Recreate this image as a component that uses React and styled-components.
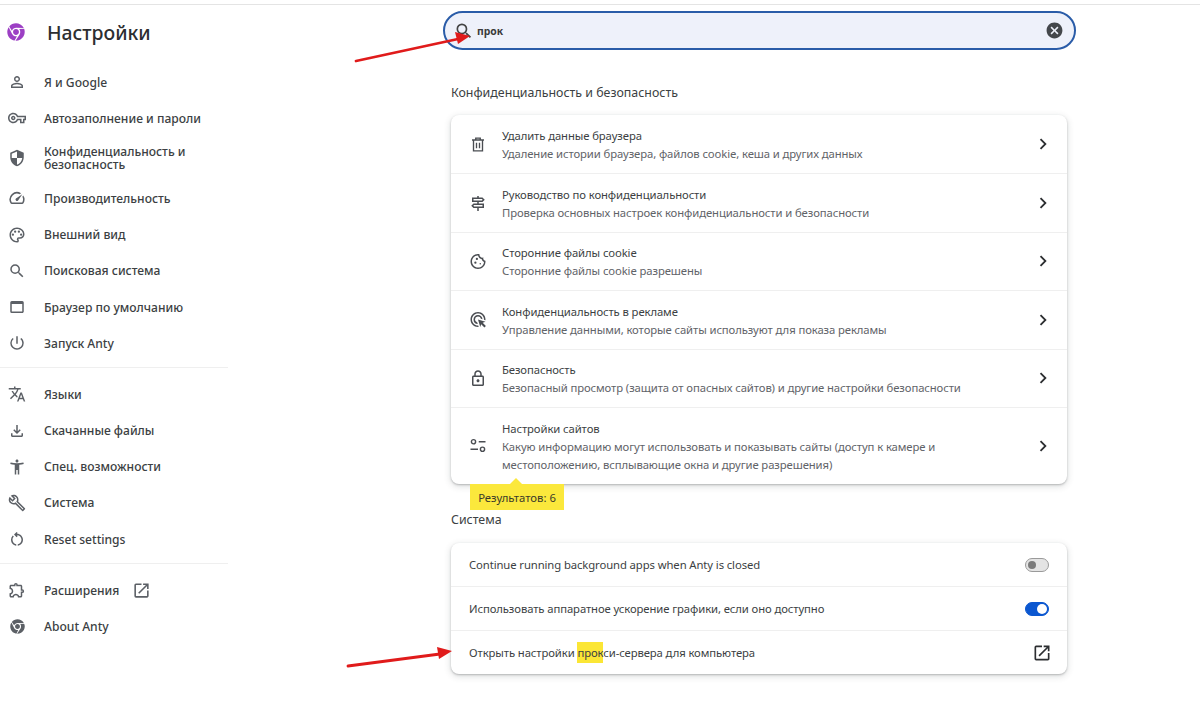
import React from "react";
import styled, { createGlobalStyle } from "styled-components";
import { FaChrome } from "react-icons/fa";
import {
  MdOutlinePersonOutline,
  MdOutlineVpnKey,
  MdSecurity,
  MdOutlineSpeed,
  MdOutlinePalette,
  MdSearch,
  MdOutlineWebAsset,
  MdPowerSettingsNew,
  MdTranslate,
  MdOutlineFileDownload,
  MdAccessibilityNew,
  MdOutlineBuild,
  MdOutlineRestartAlt,
  MdOutlineExtension,
  MdOutlineSignpost,
  MdOutlineCookie,
  MdOutlineAdsClick,
  MdOutlineLock,
  MdChevronRight,
  MdOpenInNew,
  MdCancel,
} from "react-icons/md";

const GlobalStyle = createGlobalStyle`
  html, body {
    margin: 0;
    background: #ffffff;
  }
  body {
    font-family: "Noto Sans", "Open Sans", sans-serif;
    color: #3c3f43;
  }
`;

const Page = styled.div`
  position: relative;
  width: 1200px;
  height: 724px;
  overflow: hidden;
  box-sizing: border-box;
  padding-top: 4px;
`;

const TopLine = styled.div`
  height: 1px;
  background: #e4e4e4;
`;

const Layout = styled.div`
  display: flex;
`;

const Sidebar = styled.nav`
  width: 228px;
  flex-shrink: 0;
`;

const Brand = styled.div`
  display: flex;
  align-items: center;
  gap: 22px;
  box-sizing: border-box;
  height: 51px;
  padding: 3px 0 0 7px;
  color: #9c3fc4;
  font-size: 18px;
`;

const BrandTitle = styled.h1`
  margin: 0;
  font-size: 19.4px;
  font-weight: 500;
  color: #2c2e31;
`;

const NavGroup = styled.div`
  padding: 8px 0 6px;
  border-bottom: ${(p) => (p.$last ? "none" : "1px solid #efefef")};
`;

const NavItem = styled.div`
  display: flex;
  align-items: center;
  height: ${(p) => (p.$tall ? "44px" : "36.2px")};
  padding-left: 7px;
`;

const NavIcon = styled.span`
  display: flex;
  justify-content: center;
  width: 20px;
  margin-right: 17px;
  font-size: ${(p) => p.$size || 18}px;
  color: #5c6066;
`;

const NavLabel = styled.span`
  font-size: 12.1px;
  font-weight: 500;
  line-height: 13px;
  width: 165px;
  color: #3c3f43;
`;

const ExternalMark = styled.span`
  display: flex;
  margin-left: -77px;
  font-size: 19px;
  color: #5c6066;
`;

const Column = styled.main`
  width: 616px;
  margin-left: 223px;
`;

const SearchBox = styled.div`
  display: flex;
  align-items: center;
  box-sizing: border-box;
  width: 633px;
  height: 39px;
  margin: 6px 0 0 -8px;
  padding: 0 10px 0 9px;
  background: #eef1fa;
  border: 2px solid #2a5ca8;
  border-radius: 20px;
`;

const SearchIcon = styled.span`
  display: flex;
  font-size: 20px;
  color: #444;
`;

const SearchText = styled.span`
  flex: 1;
  margin-left: 3px;
  font-size: 10.4px;
  font-weight: 700;
  color: #3a3a3a;
`;

const ClearIcon = styled.span`
  display: flex;
  font-size: 19px;
  color: #44474b;
`;

const SectionTitle = styled.h2`
  margin: 0;
  padding-top: ${(p) => p.$top}px;
  height: 20px;
  line-height: 20px;
  font-size: 12.4px;
  font-weight: 400;
  color: #3c3f43;
`;

const Card = styled.section`
  position: relative;
  margin-top: ${(p) => p.$top}px;
  background: #ffffff;
  border-radius: 8px;
  box-shadow: 0 1px 2px rgba(60, 64, 67, 0.3), 0 2px 6px 1px rgba(60, 64, 67, 0.15);
`;

const LinkRow = styled.div`
  display: flex;
  align-items: center;
  box-sizing: border-box;
  height: ${(p) => (p.$tall ? "77px" : "58.4px")};
  padding: 0 18px;
  border-top: ${(p) => (p.$first ? "none" : "1px solid #efefef")};
`;

const RowIcon = styled.span`
  display: flex;
  justify-content: center;
  width: 18px;
  margin-right: 15px;
  font-size: 19px;
  color: #4a4d52;
`;

const RowBody = styled.div`
  flex: 1;
  padding-top: 2px;
`;

const RowTitle = styled.div`
  font-size: 11.3px;
  letter-spacing: -0.1px;
  line-height: 18px;
  color: #3c3f43;
`;

const RowSub = styled.div`
  font-size: 11.3px;
  letter-spacing: -0.1px;
  line-height: 18px;
  color: #5f6368;
  max-width: 480px;
`;

const Chevron = styled.span`
  display: flex;
  margin-right: -5px;
  font-size: 22px;
  color: #2c2e31;
`;

const SystemRow = styled.div`
  display: flex;
  align-items: center;
  justify-content: space-between;
  box-sizing: border-box;
  height: ${(p) => (p.$first ? "43.5px" : "44px")};
  padding: 0 18px;
  border-top: ${(p) => (p.$first ? "none" : "1px solid #efefef")};
`;

const SystemLabel = styled.span`
  font-size: 11.3px;
  letter-spacing: -0.1px;
  color: #3c3f43;
`;

const Mark = styled.mark`
  background: #fbe635;
  color: inherit;
  padding: 3px 0;
`;

const Switch = styled.span`
  position: relative;
  display: block;
  box-sizing: border-box;
  width: 24px;
  height: 14px;
  border-radius: 7px;
  background: ${(p) => (p.$on ? "#0b57d0" : "#e4e4e4")};
  border: 1px solid ${(p) => (p.$on ? "#0b57d0" : "#9a9a9a")};
`;

const Knob = styled.span`
  position: absolute;
  top: ${(p) => (p.$on ? "1px" : "2px")};
  left: ${(p) => (p.$on ? "11px" : "2px")};
  width: ${(p) => (p.$on ? "10px" : "8px")};
  height: ${(p) => (p.$on ? "10px" : "8px")};
  border-radius: 50%;
  background: ${(p) => (p.$on ? "#ffffff" : "#7b7b7b")};
`;

const OpenIcon = styled.span`
  display: flex;
  margin-right: -3px;
  font-size: 20px;
  color: #2c2e31;
`;

const Bubble = styled.div`
  position: absolute;
  left: 19px;
  top: 100%;
  width: 94px;
  height: 26px;
  line-height: 28px;
  text-align: center;
  background: #fbe83c;
  font-size: 11.3px;
  color: #3a3a2a;

  &::before {
    content: "";
    position: absolute;
    left: 40px;
    top: -6px;
    border-left: 6px solid transparent;
    border-right: 6px solid transparent;
    border-bottom: 6px solid #fbe83c;
  }
`;

const Annotation = styled.svg`
  position: absolute;
  left: 0;
  top: 0;
  pointer-events: none;
`;

const TrashIcon = () => (
  <svg width="1em" height="1em" viewBox="0 0 24 24" fill="none" stroke="currentColor" strokeWidth="1.8">
    <path d="M4 6h16M9 6V3.5h6V6M6 6v14.5h12V6M10 9.5v7.5M14 9.5v7.5" />
  </svg>
);

const SlidersIcon = () => (
  <svg width="1em" height="1em" viewBox="0 0 24 24" fill="none" stroke="currentColor" strokeWidth="1.9">
    <circle cx="6" cy="7" r="2.8" />
    <circle cx="18" cy="17" r="2.8" />
    <path d="M13 7h9M2 17h10" />
  </svg>
);

const NAV_GROUPS = [
  [
    { icon: <MdOutlinePersonOutline />, label: "Я и Google" },
    { icon: <MdOutlineVpnKey />, label: "Автозаполнение и пароли" },
    { icon: <MdSecurity />, label: "Конфиденциальность и безопасность", tall: true },
    { icon: <MdOutlineSpeed />, label: "Производительность" },
    { icon: <MdOutlinePalette />, label: "Внешний вид" },
    { icon: <MdSearch />, label: "Поисковая система" },
    { icon: <MdOutlineWebAsset />, label: "Браузер по умолчанию" },
    { icon: <MdPowerSettingsNew />, label: "Запуск Anty" },
  ],
  [
    { icon: <MdTranslate />, label: "Языки" },
    { icon: <MdOutlineFileDownload />, label: "Скачанные файлы" },
    { icon: <MdAccessibilityNew />, label: "Спец. возможности" },
    { icon: <MdOutlineBuild />, label: "Система" },
    { icon: <MdOutlineRestartAlt />, label: "Reset settings" },
  ],
  [
    { icon: <MdOutlineExtension />, label: "Расширения", external: true },
    { icon: <FaChrome />, label: "About Anty", iconSize: 15 },
  ],
];

const PRIVACY_ROWS = [
  {
    icon: <TrashIcon />,
    title: "Удалить данные браузера",
    sub: "Удаление истории браузера, файлов cookie, кеша и других данных",
  },
  {
    icon: <MdOutlineSignpost />,
    title: "Руководство по конфиденциальности",
    sub: "Проверка основных настроек конфиденциальности и безопасности",
  },
  {
    icon: <MdOutlineCookie />,
    title: "Сторонние файлы cookie",
    sub: "Сторонние файлы cookie разрешены",
  },
  {
    icon: <MdOutlineAdsClick />,
    title: "Конфиденциальность в рекламе",
    sub: "Управление данными, которые сайты используют для показа рекламы",
  },
  {
    icon: <MdOutlineLock />,
    title: "Безопасность",
    sub: "Безопасный просмотр (защита от опасных сайтов) и другие настройки безопасности",
  },
  {
    icon: <SlidersIcon />,
    title: "Настройки сайтов",
    sub: "Какую информацию могут использовать и показывать сайты (доступ к камере и местоположению, всплывающие окна и другие разрешения)",
    tall: true,
  },
];

const App = () => (
  <Page>
    <GlobalStyle />
    <TopLine />
    <Layout>
      <Sidebar>
        <Brand>
          <FaChrome />
          <BrandTitle>Настройки</BrandTitle>
        </Brand>
        {NAV_GROUPS.map((group, i) => (
          <NavGroup key={i} $last={i === NAV_GROUPS.length - 1}>
            {group.map((item) => (
              <NavItem key={item.label} $tall={item.tall}>
                <NavIcon $size={item.iconSize}>{item.icon}</NavIcon>
                <NavLabel>{item.label}</NavLabel>
                {item.external && (
                  <ExternalMark>
                    <MdOpenInNew />
                  </ExternalMark>
                )}
              </NavItem>
            ))}
          </NavGroup>
        ))}
      </Sidebar>

      <Column>
        <SearchBox>
          <SearchIcon>
            <MdSearch />
          </SearchIcon>
          <SearchText>прок</SearchText>
          <ClearIcon>
            <MdCancel />
          </ClearIcon>
        </SearchBox>

        <SectionTitle $top={33}>Конфиденциальность и безопасность</SectionTitle>
        <Card $top={12}>
          {PRIVACY_ROWS.map((row, i) => (
            <LinkRow key={row.title} $first={i === 0} $tall={row.tall}>
              <RowIcon>{row.icon}</RowIcon>
              <RowBody>
                <RowTitle>{row.title}</RowTitle>
                <RowSub>{row.sub}</RowSub>
              </RowBody>
              <Chevron>
                <MdChevronRight />
              </Chevron>
            </LinkRow>
          ))}
          <Bubble>Результатов: 6</Bubble>
        </Card>

        <SectionTitle $top={26}>Система</SectionTitle>
        <Card $top={13}>
          <SystemRow $first>
            <SystemLabel>Continue running background apps when Anty is closed</SystemLabel>
            <Switch>
              <Knob />
            </Switch>
          </SystemRow>
          <SystemRow>
            <SystemLabel>Использовать аппаратное ускорение графики, если оно доступно</SystemLabel>
            <Switch $on>
              <Knob $on />
            </Switch>
          </SystemRow>
          <SystemRow>
            <SystemLabel>
              Открыть настройки <Mark>прок</Mark>си-сервера для компьютера
            </SystemLabel>
            <OpenIcon>
              <MdOpenInNew />
            </OpenIcon>
          </SystemRow>
        </Card>
      </Column>
    </Layout>

    <Annotation width="1200" height="724" viewBox="0 0 1200 724">
      <path d="M356 61L458 39" stroke="#e01b1b" strokeWidth="2.8" strokeLinecap="round" />
      <path d="M470 36L455 32L458 44Z" fill="#e01b1b" />
      <path d="M348 666L440 654" stroke="#e01b1b" strokeWidth="2.8" strokeLinecap="round" />
      <path d="M452 651L437 647L439 659Z" fill="#e01b1b" />
    </Annotation>
  </Page>
);

export default App;
